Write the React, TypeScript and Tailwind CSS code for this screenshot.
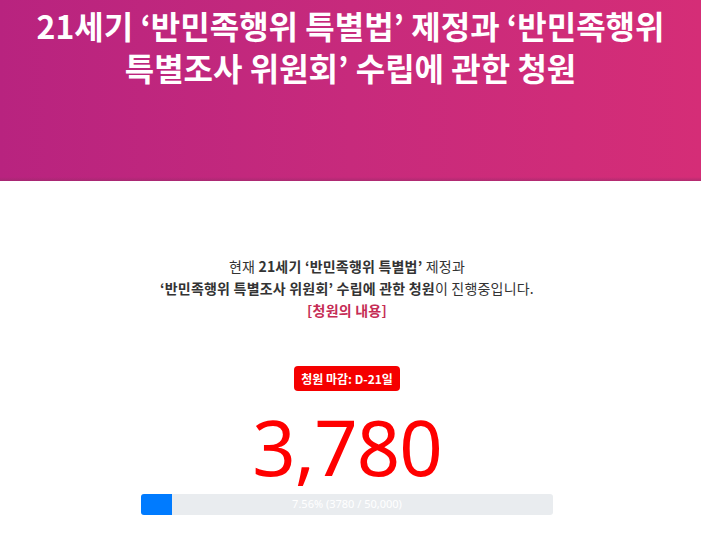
export default function App() {
  const count = 3780;
  const goal = 50000;
  const pct = (count / goal) * 100;
  const label = `${pct.toFixed(2)}% (${count} / ${goal.toLocaleString("en-US")})`;

  return (
    <div className="min-h-[538px] bg-white font-['Noto_Sans_CJK_KR',sans-serif]">
      <header className="relative h-[181px] bg-gradient-to-r from-[#b8237f] via-[#c72a7c] to-[#d52d77] pt-[4px]">
        <h1 className="px-4 text-center text-[32px] font-bold leading-[42px] text-white">
          21세기 ‘반민족행위 특별법’ 제정과 ‘반민족행위
          <br />
          특별조사 위원회’ 수립에 관한 청원
        </h1>
        <div className="absolute bottom-0 left-0 right-0 h-[4px] bg-gradient-to-b from-transparent to-[#9a2a6a]/60" />
      </header>

      <section className="flex flex-col items-center pr-[7px] pt-[74px]">
        <p className="text-center text-[14px] leading-[22px] tracking-[0.2px] text-[#333]">
          현재 <b>21세기 ‘반민족행위 특별법’</b> 제정과
          <br />
          <b>‘반민족행위 특별조사 위원회’ 수립에 관한 청원</b>이 진행중입니다.
          <br />
          <b className="text-[#c52c55]">[청원의 내용]</b>
        </p>

        <div className="mt-[45px] rounded-[4px] bg-[#f50000] px-[7px] py-[4px] text-[12px] font-bold leading-[17px] text-white">
          청원 마감: D-21일
        </div>

        <div className="mt-[11px] font-['Noto_Sans',sans-serif] text-[76px] leading-[90px] tracking-[-1px] text-[#f00]">
          {count.toLocaleString("en-US")}
        </div>

        <div className="relative mt-[2px] h-[21px] w-[412px] overflow-hidden rounded-[3px] bg-[#e9ecef]">
          <div className="h-full bg-[#007bff]" style={{ width: `${pct}%` }} />
          <span className="absolute inset-0 flex items-center justify-center font-['Noto_Sans',sans-serif] text-[11px] text-white">
            {label}
          </span>
        </div>
      </section>
    </div>
  );
}
